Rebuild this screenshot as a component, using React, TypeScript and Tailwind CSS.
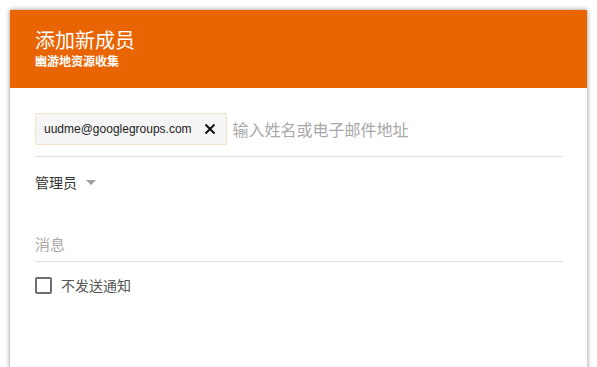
import React from 'react';

const font = { fontFamily: '"Noto Sans CJK SC", Roboto, "Liberation Sans", sans-serif' };

export default function App() {
  return (
    <div className="h-[367px] w-[597px] overflow-hidden bg-white pl-[10px] pt-[10px]" style={font}>
      <div className="h-[400px] w-[577px] bg-white shadow-[0_0_5px_rgba(0,0,0,0.45)]">
        <div className="flex h-[78px] flex-col justify-center gap-[5px] bg-[#e96503] pl-[25px] pb-[2px] text-white">
          <div className="text-[20px] leading-[20px]">添加新成员</div>
          <div className="text-[12px] font-bold leading-[12px]">幽游地资源收集</div>
        </div>
        <div className="px-[25px] pt-[25px]">
          <div className="flex w-[528px] items-center gap-[6px] border-b border-[#e0e0e0] pb-[11px]">
            <div className="flex h-[32px] items-center rounded-[2px] border border-[#efe3c4] bg-[#f5f5f5] pl-[8px] pr-[10px]">
              <span className="text-[12px] text-[#222]" style={{ fontFamily: '"Liberation Sans", Arial, sans-serif' }}>uudme@googlegroups.com</span>
              <svg className="ml-[12px]" width="12" height="12" viewBox="0 0 12 12">
                <path d="M1.5 1.5 L10.5 10.5 M10.5 1.5 L1.5 10.5" stroke="#111" strokeWidth="2" />
              </svg>
            </div>
            <span className="text-[16px] text-[#a8a8a8]">输入姓名或电子邮件地址</span>
          </div>
          <div className="flex h-[52px] items-start pt-[14px]">
            <span className="text-[14px] leading-[22px] text-[#333]">管理员</span>
            <svg className="ml-[9px] mt-[9px]" width="10" height="6" viewBox="0 0 10 6">
              <path d="M0 0 L10 0 L5 5 Z" fill="#9e9e9e" />
            </svg>
          </div>
          <div className="mt-[24px] w-[528px] border-b border-[#e0e0e0] pb-[5px] text-[15px] text-[#aaa]">消息</div>
          <label className="mt-[13px] flex items-center gap-[9px]">
            <span className="h-[17px] w-[17px] rounded-[2px] border-2 border-[#6e6e6e]" />
            <span className="text-[14px] text-[#555]">不发送通知</span>
          </label>
        </div>
      </div>
    </div>
  );
}
